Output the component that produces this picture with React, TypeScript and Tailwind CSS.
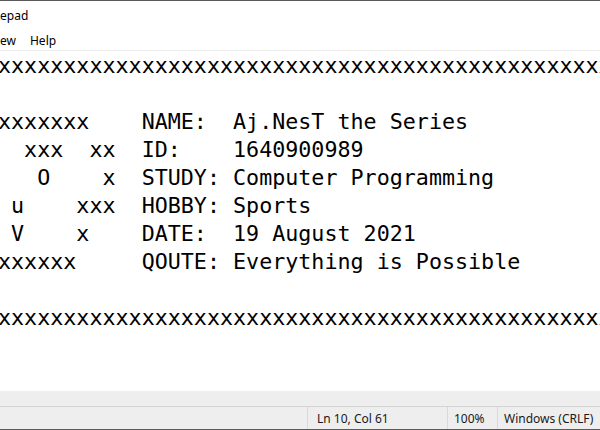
import React from "react";

const uiFont = "font-['Noto_Sans','Open_Sans',sans-serif]";

const lines = [
  "x".repeat(60),
  "",
  "xxxxxxx    NAME:  Aj.NesT the Series",
  "  xxx  xx  ID:    1640900989",
  "   O    x  STUDY: Computer Programming",
  " u    xxx  HOBBY: Sports",
  " V    x    DATE:  19 August 2021",
  "xxxxxx     QOUTE: Everything is Possible",
  "",
  "x".repeat(60),
];

export default function App() {
  return (
    <div className="w-[600px] h-[430px] overflow-hidden flex flex-col bg-white border-t border-[#5a5a5a]">
      {/* title bar */}
      <div className={`h-[31px] flex items-center text-[12px] text-black ${uiFont}`}>
        <span className="-mt-[1px]">epad</span>
      </div>
      {/* menu */}
      <div className={`h-[18px] flex items-center gap-[14px] text-[12px] text-black ${uiFont}`}>
        <span>ew</span>
        <span>Help</span>
      </div>
      <div className="h-px bg-[#ececec]" />

      {/* editor */}
      <div className="flex-1 overflow-hidden pt-[1px]">
        <div className="ml-[-2px] font-['DejaVu_Sans_Mono',monospace] text-[21.7px] leading-[28px] text-black whitespace-pre">
          {lines.map((l, i) => (
            <div key={i} className="h-[28px]">
              {l}
            </div>
          ))}
        </div>
      </div>

      {/* scrollbar strip */}
      <div className="h-[16px] bg-[#eeeeee] border-b border-[#d4d4d4]" />

      {/* status bar */}
      <div className={`h-[23px] bg-[#eeeeee] flex text-[12px] text-[#1a1a1a] ${uiFont} border-b border-[#5a5a5a]`}>
        <div className="flex-1" />
        <div className="w-[140px] border-l border-[#d9d9d9] pl-[9px] pt-[2px] flex items-center">Ln 10, Col 61</div>
        <div className="w-[50px] border-l border-[#d9d9d9] pl-[6px] pt-[2px] flex items-center">100%</div>
        <div className="w-[103px] border-l border-[#d9d9d9] pl-[6px] pt-[2px] flex items-center whitespace-nowrap">Windows (CRLF)</div>
      </div>
    </div>
  );
}
